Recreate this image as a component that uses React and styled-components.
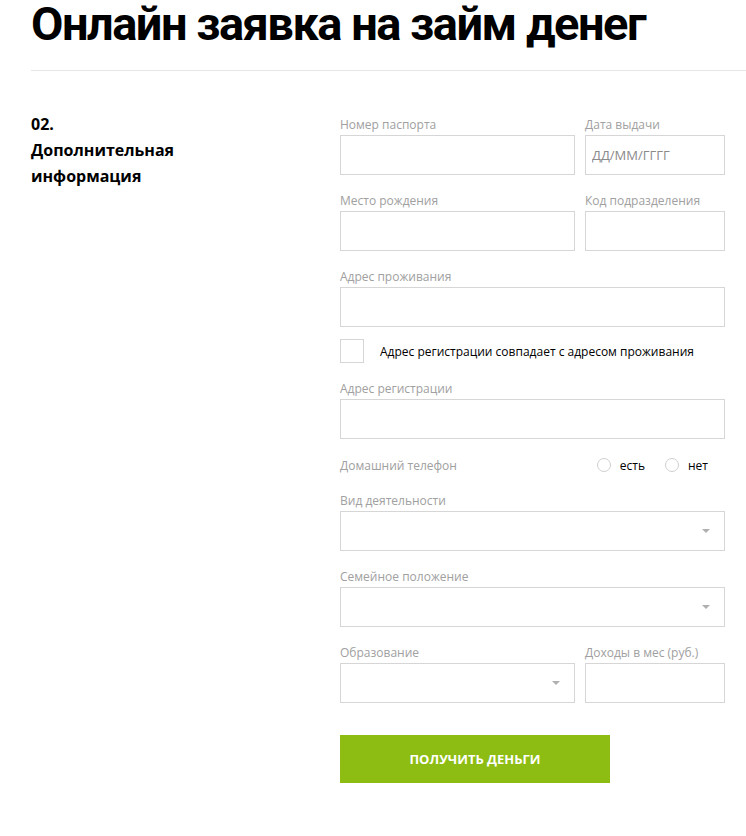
import React from 'react';
import styled, { createGlobalStyle } from 'styled-components';

const GlobalStyle = createGlobalStyle`
  body {
    margin: 0;
    background: #ffffff;
    font-family: "Open Sans", "Liberation Sans", sans-serif;
  }
`;

const Page = styled.div`
  padding-left: 31px;
`;

const Title = styled.h1`
  margin: -5px 0 0;
  font-family: Roboto, "Liberation Sans", sans-serif;
  font-weight: 700;
  font-size: 47px;
  line-height: 58px;
  color: #000;
  letter-spacing: -1.5px;
  white-space: nowrap;
`;

const Divider = styled.hr`
  margin: 17px 0 0;
  border: 0;
  border-top: 1px solid #e6e6e6;
  height: 0;
`;

const Section = styled.div`
  display: grid;
  grid-template-columns: 309px 385px;
  align-items: start;
  padding-top: 40px;
`;

const StepTitle = styled.div`
  font-family: "Open Sans", "Liberation Sans", sans-serif;
  font-weight: 700;
  font-size: 16px;
  line-height: 26px;
  color: #000;
`;

const Form = styled.form`
  display: flex;
  flex-direction: column;
  padding-top: 6px;
`;

const Row = styled.div`
  display: grid;
  grid-template-columns: ${p => (p.$split ? '235px 140px' : '1fr')};
  column-gap: 10px;
  margin-bottom: ${p => p.$mb ?? 18}px;
`;

const Field = styled.label`
  display: flex;
  flex-direction: column;
`;

const Label = styled.span`
  font-size: 12px;
  line-height: 16px;
  color: #a0a0a0;
  margin-bottom: 2px;
  white-space: nowrap;
`;

const Input = styled.input`
  box-sizing: border-box;
  height: 40px;
  width: 100%;
  border: 1px solid #d6d6d6;
  padding: 0 6px;
  font-family: inherit;
  font-size: 13px;
  color: #333;
  outline: none;
  &::placeholder {
    color: #8a8a8a;
  }
`;

const SelectBox = styled.div`
  box-sizing: border-box;
  height: 40px;
  border: 1px solid #d6d6d6;
  display: flex;
  align-items: center;
  justify-content: flex-end;
  padding-right: 14px;
`;

const Caret = styled.span`
  width: 0;
  height: 0;
  border-left: 4px solid transparent;
  border-right: 4px solid transparent;
  border-top: 4px solid #b0b0b0;
`;

const CheckRow = styled.label`
  display: flex;
  align-items: center;
  gap: 16px;
  margin-bottom: 18px;
  font-size: 12px;
  color: #000;
`;

const CheckBox = styled.span`
  box-sizing: border-box;
  width: 24px;
  height: 24px;
  border: 1px solid #d6d6d6;
`;

const PhoneRow = styled.div`
  display: flex;
  align-items: center;
  height: 20px;
  padding-right: 14px;
  margin-bottom: 18px;
`;

const PhoneLabel = styled.span`
  flex: 1;
  font-size: 12px;
  color: #a0a0a0;
`;

const Radio = styled.label`
  display: flex;
  align-items: center;
  gap: 9px;
  font-size: 12px;
  color: #000;
  margin-left: ${p => p.$ml || 0}px;
  min-width: 46px;
`;

const RadioDot = styled.span`
  box-sizing: border-box;
  width: 14px;
  height: 14px;
  border-radius: 50%;
  border: 1px solid #d0d0d0;
`;

const Button = styled.button`
  margin-top: 14px;
  width: 270px;
  height: 48px;
  border: 0;
  background: #8dbd12;
  color: #fff;
  font-family: "Open Sans", "Liberation Sans", sans-serif;
  font-weight: 700;
  font-size: 13px;
  text-transform: uppercase;
  cursor: pointer;
`;

const TextField = ({ label, placeholder }) => (
  <Field>
    <Label>{label}</Label>
    <Input placeholder={placeholder} />
  </Field>
);

const SelectField = ({ label }) => (
  <Field>
    <Label>{label}</Label>
    <SelectBox>
      <Caret />
    </SelectBox>
  </Field>
);

export default function App() {
  return (
    <Page>
      <GlobalStyle />
      <Title>Онлайн заявка на займ денег</Title>
      <Divider />
      <Section>
        <StepTitle>
          02.
          <br />
          Дополнительная
          <br />
          информация
        </StepTitle>
        <Form onSubmit={e => e.preventDefault()}>
          <Row $split>
            <TextField label="Номер паспорта" />
            <TextField label="Дата выдачи" placeholder="ДД/ММ/ГГГГ" />
          </Row>
          <Row $split>
            <TextField label="Место рождения" />
            <TextField label="Код подразделения" />
          </Row>
          <Row $mb={12}>
            <TextField label="Адрес проживания" />
          </Row>
          <CheckRow>
            <CheckBox />
            Адрес регистрации совпадает с адресом проживания
          </CheckRow>
          <Row $mb={16}>
            <TextField label="Адрес регистрации" />
          </Row>
          <PhoneRow>
            <PhoneLabel>Домашний телефон</PhoneLabel>
            <Radio>
              <RadioDot />
              есть
            </Radio>
            <Radio $ml={20}>
              <RadioDot />
              нет
            </Radio>
          </PhoneRow>
          <Row>
            <SelectField label="Вид деятельности" />
          </Row>
          <Row>
            <SelectField label="Семейное положение" />
          </Row>
          <Row $split $mb={18}>
            <SelectField label="Образование" />
            <TextField label="Доходы в мес (руб.)" />
          </Row>
          <Button type="submit">Получить деньги</Button>
        </Form>
      </Section>
    </Page>
  );
}
